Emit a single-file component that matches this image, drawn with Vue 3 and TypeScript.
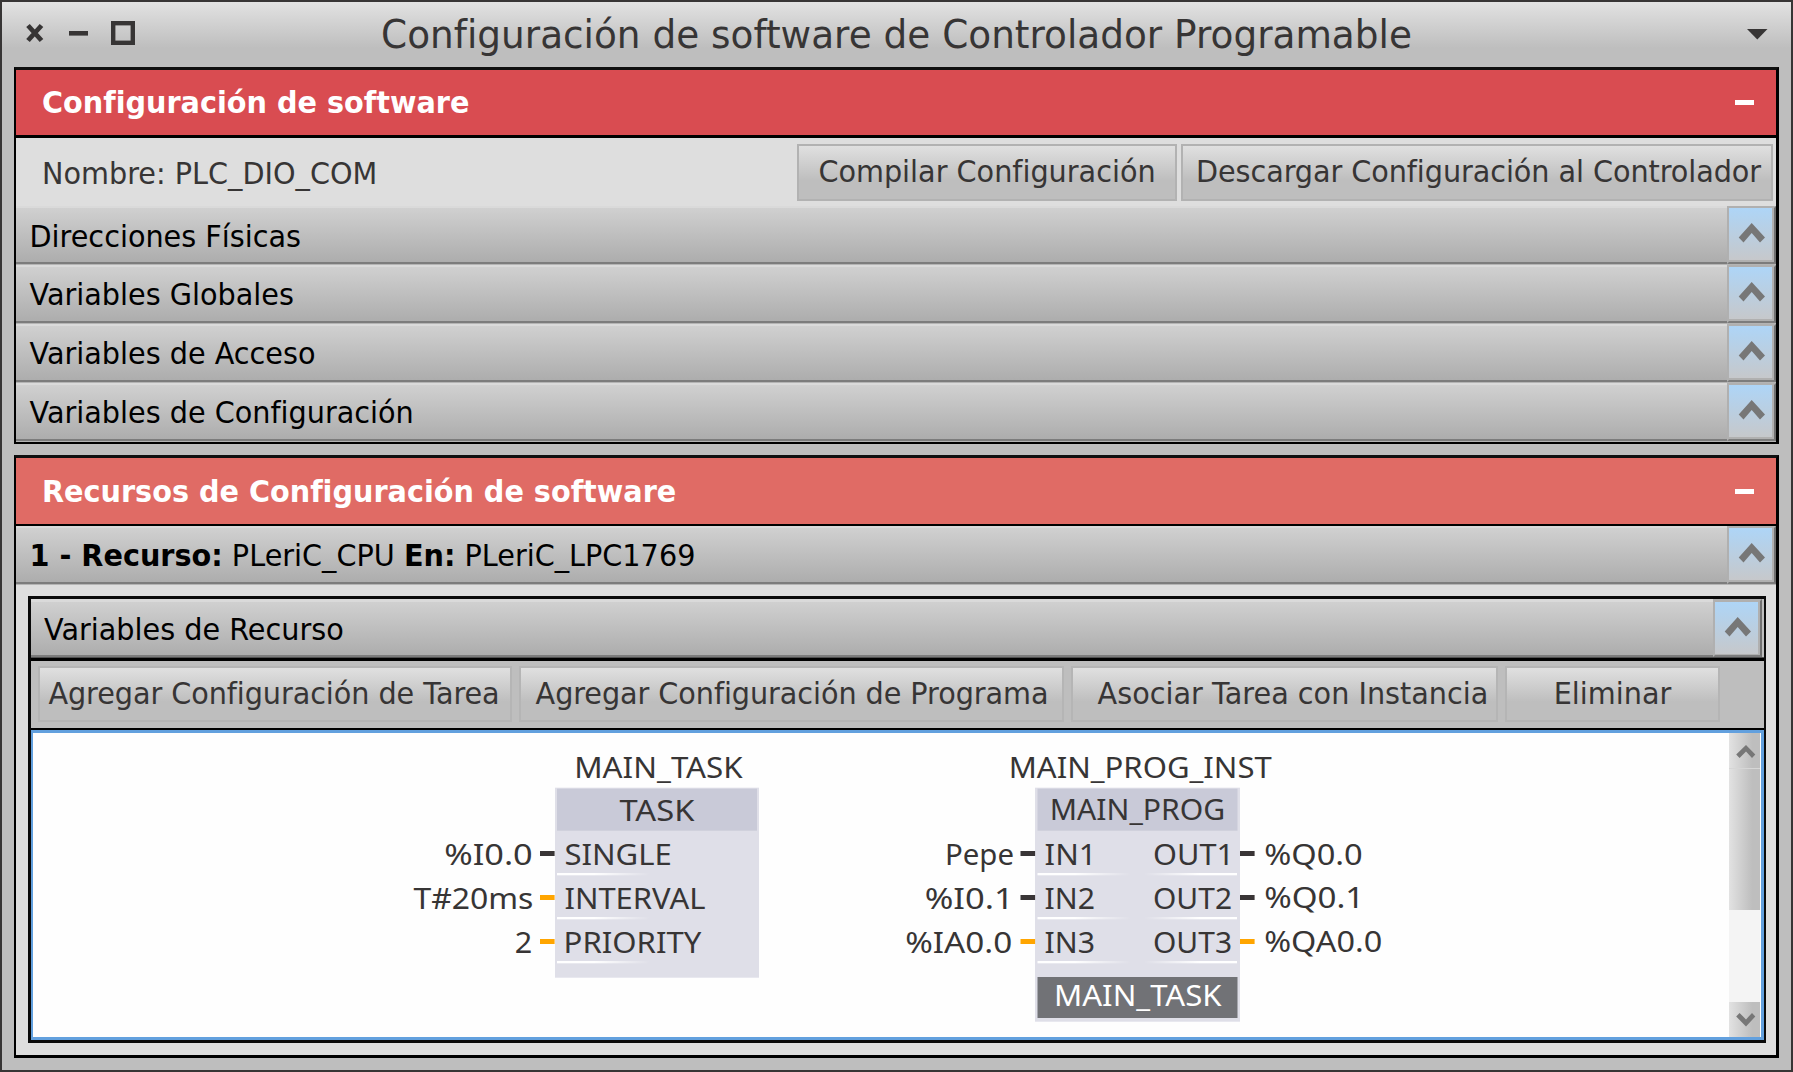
<script setup lang="ts">
interface Label {
  text: string
  x: number
  y: number
  width: number
  light?: boolean
}

interface Stub {
  x: number
  y: number
  analog?: boolean
}

const sections: string[] = [
  'Direcciones Físicas',
  'Variables Globales',
  'Variables de Acceso',
  'Variables de Configuración',
]

const labels: Label[] = [
  { text: 'MAIN_TASK', x: 574.2, y: 777.5, width: 168.5 },
  { text: 'TASK', x: 619.4, y: 820.5, width: 75 },
  { text: '%I0.0', x: 444.2, y: 864.5, width: 88.5 },
  { text: 'T#20ms', x: 413.4, y: 908.7, width: 120 },
  { text: '2', x: 514.8, y: 952.5, width: 17.5 },
  { text: 'SINGLE', x: 564.4, y: 864.5, width: 107.4 },
  { text: 'INTERVAL', x: 564.4, y: 908.7, width: 141 },
  { text: 'PRIORITY', x: 563.6, y: 952.5, width: 137.8 },
  { text: 'MAIN_PROG_INST', x: 1008.7, y: 777.5, width: 263 },
  { text: 'MAIN_PROG', x: 1049.7, y: 819.7, width: 175.5 },
  { text: 'Pepe', x: 945, y: 864.7, width: 69 },
  { text: '%I0.1', x: 924.7, y: 908.7, width: 89 },
  { text: '%IA0.0', x: 905.2, y: 952.5, width: 107 },
  { text: 'IN1', x: 1044.6, y: 864.5, width: 52 },
  { text: 'IN2', x: 1044.6, y: 908.7, width: 50.5 },
  { text: 'IN3', x: 1044.6, y: 952.5, width: 50.5 },
  { text: 'OUT1', x: 1153, y: 864.5, width: 81 },
  { text: 'OUT2', x: 1153, y: 908.7, width: 79 },
  { text: 'OUT3', x: 1153, y: 952.5, width: 79 },
  { text: '%Q0.0', x: 1264.2, y: 864.5, width: 98.5 },
  { text: '%Q0.1', x: 1264.2, y: 907.5, width: 100 },
  { text: '%QA0.0', x: 1264.2, y: 951.5, width: 118 },
  { text: 'MAIN_TASK', x: 1054, y: 1005.5, width: 167.5, light: true },
]

const stubs: Stub[] = [
  { x: 540, y: 851 },
  { x: 540, y: 895, analog: true },
  { x: 540, y: 939, analog: true },
  { x: 1020.5, y: 851 },
  { x: 1020.5, y: 895 },
  { x: 1020.5, y: 939, analog: true },
  { x: 1240, y: 851 },
  { x: 1240, y: 895 },
  { x: 1240, y: 939, analog: true },
]

const separators: number[] = [873, 917, 961]
</script>

<template>
  <div class="window">
    <header class="titlebar">
      <svg class="controls" width="112" height="26" viewBox="25 20 112 26">
        <path d="M28 25.5 41.5 40.5M41.5 25.5 28 40.5" stroke="#373535" stroke-width="4.8" fill="none" />
        <rect x="69" y="31" width="19" height="4.6" fill="#373535" />
        <rect x="113.2" y="23.2" width="19.6" height="19.6" stroke="#373535" stroke-width="4.4" fill="none" />
      </svg>
      <h1>Configuración de software de Controlador Programable</h1>
      <svg class="menu" width="21" height="11" viewBox="0 0 21 11">
        <path d="M0 0H20.5L10.3 10.5Z" fill="#373535" />
      </svg>
    </header>

    <section class="panel">
      <div class="panel-head config">
        <span class="t">Configuración de software</span>
        <i class="minus"></i>
      </div>
      <div class="name-bar">
        <span class="name t">Nombre: PLC_DIO_COM</span>
        <button class="btn compile"><span class="t">Compilar Configuración</span></button>
        <button class="btn download"><span class="t">Descargar Configuración al Controlador</span></button>
      </div>
      <div v-for="section in sections" :key="section" class="row">
        <span class="row-label"><span class="t">{{ section }}</span></span>
        <span class="toggle">
          <svg width="43" height="52" viewBox="0 0 43 52">
            <path d="M22.7 15 36 29.5 31 34.5 22.7 25 14.5 34.5 9.7 29.5Z" fill="#777" />
          </svg>
        </span>
      </div>
    </section>

    <section class="panel resources">
      <div class="panel-head res">
        <span class="t">Recursos de Configuración de software</span>
        <i class="minus"></i>
      </div>
      <div class="row">
        <span class="row-label"><span class="t"><b>1 - Recurso:</b> PLeriC_CPU <b>En:</b> PLeriC_LPC1769</span></span>
        <span class="toggle">
          <svg width="43" height="52" viewBox="0 0 43 52">
            <path d="M22.7 15 36 29.5 31 34.5 22.7 25 14.5 34.5 9.7 29.5Z" fill="#777" />
          </svg>
        </span>
      </div>

      <div class="inner">
        <div class="row inner-row">
          <span class="row-label"><span class="t">Variables de Recurso</span></span>
          <span class="toggle">
            <svg width="43" height="52" viewBox="0 0 43 52">
              <path d="M22.7 15 36 29.5 31 34.5 22.7 25 14.5 34.5 9.7 29.5Z" fill="#777" />
            </svg>
          </span>
        </div>
        <div class="toolbar">
          <button class="btn task"><span class="t">Agregar Configuración de Tarea</span></button>
          <button class="btn program"><span class="t">Agregar Configuración de Programa</span></button>
          <button class="btn link"><span class="t">Asociar Tarea con Instancia</span></button>
          <button class="btn remove"><span class="t">Eliminar</span></button>
        </div>
        <div class="canvas">
          <svg class="diagram" width="1696" height="304" viewBox="33 733 1696 304">
            <defs>
              <linearGradient id="fadeRight">
                <stop offset="0" stop-color="#fff" />
                <stop offset="0.4" stop-color="#fff" />
                <stop offset="1" stop-color="#fff" stop-opacity="0" />
              </linearGradient>
              <linearGradient id="fadeLeft">
                <stop offset="0" stop-color="#fff" stop-opacity="0" />
                <stop offset="0.6" stop-color="#fff" />
                <stop offset="1" stop-color="#fff" />
              </linearGradient>
            </defs>

            <rect x="555" y="787.7" width="204" height="190" fill="#dfdfe8" />
            <rect x="557" y="788.7" width="200" height="42" fill="#c9cad8" />
            <rect x="1035" y="787.7" width="205" height="234" fill="#dfdfe8" />
            <rect x="1037.5" y="788.7" width="200" height="42" fill="#c9cad8" />
            <rect x="1037.5" y="977" width="200" height="41" fill="#717276" />

            <g v-for="y in separators" :key="y">
              <rect x="557" :y="y" width="93" height="2.3" fill="url(#fadeRight)" />
              <rect x="1037.5" :y="y" width="93" height="2.3" fill="url(#fadeRight)" />
              <rect x="1144" :y="y" width="93" height="2.3" fill="url(#fadeLeft)" />
            </g>

            <rect
              v-for="(s, n) in stubs"
              :key="n"
              :x="s.x"
              :y="s.y"
              width="14.6"
              height="5"
              :fill="s.analog ? '#ffa500' : '#393536'"
            />

            <text
              v-for="(l, n) in labels"
              :key="n"
              :x="l.x"
              :y="l.y"
              :textLength="l.width"
              lengthAdjust="spacingAndGlyphs"
              :class="{ light: l.light }"
            >{{ l.text }}</text>
          </svg>
          <div class="scrollbar">
            <span class="arrow">
              <svg width="31" height="35" viewBox="0 0 31 35">
                <path d="M17 12 26.3 21.5 23 25 17 18.6 10.6 25 7.2 21.5Z" fill="#777" />
              </svg>
            </span>
            <span class="thumb"></span>
            <span class="track"></span>
            <span class="arrow">
              <svg width="31" height="35" viewBox="0 0 31 35">
                <path d="M17 24.6 26.3 14.5 23 11 17 17.4 10.6 11 7.2 14.5Z" fill="#777" />
              </svg>
            </span>
          </div>
        </div>
      </div>
    </section>
  </div>
</template>

<style>
body {
  margin: 0;
  overflow: hidden;
}
</style>

<style scoped>
.window {
  box-sizing: border-box;
  width: 1793px;
  height: 1072px;
  border: 2px solid #373535;
  background: #bebebe;
  font-family: 'DejaVu Sans', sans-serif;
  font-size: 28.7px;
  font-variant-ligatures: none;
  color: #373535;
  white-space: nowrap;
}

/* Slightly tall lettering, stretched from the baseline */
.t {
  display: block;
  transform: scaleY(1.04);
  transform-origin: 0 calc(50% + 10px);
}

.titlebar {
  height: 65px;
  display: grid;
  grid-template-columns: 1fr auto 1fr;
  background: linear-gradient(#e2e2e2, #bebebe 46px);
}

.controls {
  display: block;
  margin: 18px 0 0 23px;
}

.titlebar h1 {
  margin: 0;
  font-size: 37.4px;
  font-weight: 400;
  line-height: 66px;
  transform: scaleY(1.03);
  transform-origin: 0 46px;
}

.menu {
  display: block;
  margin: 27px 23px 0 0;
  justify-self: end;
}

.panel {
  box-sizing: border-box;
  width: 1765px;
  height: 377px;
  margin-left: 12px;
  border: 2px solid #000;
  border-top: 3px solid #101010;
  border-right-width: 3px;
  background: #dedede;
}

.resources {
  height: 603px;
  margin-top: 11px;
  border-bottom-width: 3px;
}

.panel-head {
  display: flex;
  justify-content: space-between;
  align-items: center;
  padding: 0 22px 0 26px;
  height: 65px;
  border-bottom: 3px solid #000;
  color: #fff;
  font-weight: 700;
}

.panel-head span {
  padding-top: 1px;
}

.config {
  background: #d94c51;
}

.res {
  height: 66px;
  border-bottom-width: 2px;
  background: #e06b65;
}

.minus {
  width: 19px;
  height: 5px;
  background: #fff;
}

.name-bar {
  display: flex;
  box-sizing: border-box;
  height: 68px;
  padding: 6px 3px 5px 26px;
}

.name {
  flex: 1;
  line-height: 60px;
}

.btn {
  box-sizing: border-box;
  margin: 0;
  padding: 0;
  height: 57px;
  border: 2px solid #b2b2b2;
  background: linear-gradient(#e0e0e0, #bebebe 65%);
  color: #373535;
  font: inherit;
  font-variant-ligatures: none;
  line-height: 51px;
  text-align: center;
}

.btn .t {
  margin-top: -1px;
}

.compile {
  width: 380px;
  margin-right: 4px;
}

.download {
  width: 592px;
}

.name-bar .download {
  padding-left: 3px;
  letter-spacing: -0.07px;
}

.row {
  box-sizing: border-box;
  display: flex;
  height: 59px;
  border-bottom: 1px solid #b4b4b4;
}

.row-label {
  box-sizing: border-box;
  flex: 1;
  height: 58px;
  padding-left: 13.5px;
  border-top: 2px solid #dadada;
  border-bottom: 2px solid #7c7c7c;
  background: linear-gradient(#d0d0d0, #adadad);
  color: #000;
  line-height: 56px;
}

.name-bar + .row .row-label {
  line-height: 58px;
}

.toggle {
  box-sizing: border-box;
  width: 49px;
  height: 58px;
  border: 2px solid #b0b0b0;
  border-right: 2px solid #707070;
  border-bottom: 2px solid #7c7c7c;
  background: #b0b0b0;
}

.toggle svg {
  display: block;
  background: linear-gradient(#aed5f7, #c6c8cb);
}

.inner {
  box-sizing: border-box;
  width: 1738px;
  height: 447px;
  margin: 11px 0 0 12px;
  border: 3px solid #0a0a0a;
  border-right-width: 2px;
  background: #bebebe;
}

.inner-row {
  border-bottom-color: #505050;
  padding-right: 2px;
}

.inner-row .row-label {
  line-height: 56px;
  border-top-width: 3px;
  padding-left: 13px;
}

.inner-row .toggle {
  padding-top: 1px;
}

.toolbar {
  display: flex;
  box-sizing: border-box;
  height: 72px;
  padding: 5px 0 0 7px;
  border-top: 3px solid #000;
  border-bottom: 2px solid #000;
}

.toolbar .btn {
  height: 56px;
  margin-right: 7px;
  border-color: #b5b5b5;
  line-height: 50px;
}

.task {
  width: 474px;
}

.toolbar .task {
  letter-spacing: -0.07px;
  padding-right: 2px;
}

.program {
  width: 545px;
}

.toolbar .program {
  letter-spacing: -0.07px;
  padding-left: 1px;
}

.link {
  width: 427px;
}

.toolbar .link {
  padding-left: 17px;
}

.remove {
  width: 215px;
}

.canvas {
  box-sizing: border-box;
  display: flex;
  height: 310px;
  border: 3px solid #62a0de;
  border-left-width: 2px;
  background: #fefefe;
}

.diagram {
  display: block;
  flex: none;
}

.diagram text {
  font-family: 'Noto Sans', sans-serif;
  font-size: 29.3px;
  fill: #373535;
}

.diagram text.light {
  fill: #fff;
}

.scrollbar {
  display: flex;
  flex-direction: column;
  width: 31px;
  height: 304px;
}

.arrow,
.thumb {
  box-sizing: border-box;
  background: linear-gradient(90deg, #e2e2e2, #bebebe 75%);
}

.arrow {
  height: 35px;
}

.arrow svg {
  display: block;
}

.thumb {
  height: 142px;
  border-top: 1px solid #d6d6d6;
}

.track {
  flex: 1;
  background: #f4f4f4;
}
</style>
